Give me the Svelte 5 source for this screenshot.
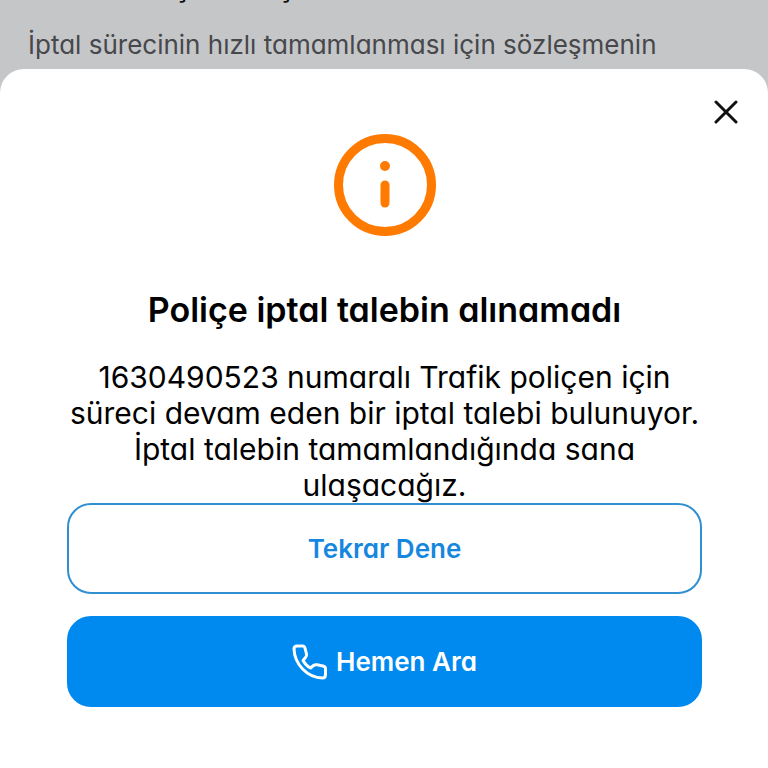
<script>
    const policyNumber = '1630490523';

    let open = true;
    let retries = 0;

    function close() {
        open = false;
    }
    function retry() {
        retries += 1;
    }
    function keydown(event) {
        if (event.key === 'Escape') {
            close();
        }
    }
</script>

<svelte:window on:keydown={keydown}/>

<main>
    <div class="behind">
        <h2>Noter Satış Sözleşmesi</h2>
        <p>İptal sürecinin hızlı tamamlanması için sözleşmenin</p>
    </div>

    {#if open}
        <section class="sheet" role="dialog" aria-modal="true" aria-labelledby="title">
            <button class="close" aria-label="Kapat" on:click={close}>
                <svg viewBox="0 0 24 24" width="24" height="24">
                    <path d="M2 2 22 22M22 2 2 22"/>
                </svg>
            </button>

            <svg class="info" viewBox="0 0 104 104" width="104" height="104">
                <circle cx="52" cy="52" r="46.5"/>
                <circle class="dot" cx="52" cy="33" r="5"/>
                <path d="M52 52v18"/>
            </svg>

            <h1 id="title">Poliçe iptal talebin alınamadı</h1>
            <p class="message">
                {policyNumber} numaralı Trafik poliçen için süreci devam eden bir iptal talebi bulunuyor.
                İptal talebin tamamlandığında sana ulaşacağız.
            </p>

            <div class="actions">
                <button class="outline" on:click={retry}>Tekrar Dene</button>
                <button class="primary">
                    <svg viewBox="0 0 36 36" width="36" height="36">
                        <path d="M5 2h6c1 0 1.500 .5 2 2l1.500 6c.3 1.500 0 2.500-1 3.500l-2.500 3c2 3.500 4.500 6 7.500 7.500l3-2.500c1-.8 2-1 3.500-.7l6 1.200c1.500 .5 2.500 1 2.500 2.500v6c0 2-1 3.500-3 3.500C15 33.500 2.500 20 2 5c0-2 1-3 3-3z"/>
                    </svg>
                    Hemen Ara
                </button>
            </div>
        </section>
    {/if}
</main>

<style>
    :global(body) {
        background: #c5c6c8;
    }
    main {
        min-height: 100vh;
        display: flex;
        flex-direction: column;
        overflow: hidden;
        font-family: Inter, "Noto Sans", sans-serif;
        /* single-storey a */
        font-feature-settings: "cv11";
    }
    h1, h2, p {
        margin: 0;
    }
    /* the page is scrolled, so its heading is cut by the top edge */
    .behind {
        margin-top: -32px;
        padding: 0 28px 6px;
    }
    .behind h2 {
        color: #111;
        font-size: 30px;
        line-height: 36px;
        font-weight: 600;
    }
    .behind p {
        padding-top: 23px;
        color: #46484b;
        font-size: 26px;
        line-height: 36px;
        white-space: nowrap;
    }
    .sheet {
        position: relative;
        flex: 1;
        display: flex;
        flex-direction: column;
        align-items: center;
        padding: 64px 66px 59px 67px;
        border-radius: 24px 24px 0 0;
        background: #fff;
    }
    button {
        font: inherit;
        font-feature-settings: inherit;
        cursor: pointer;
    }
    svg {
        display: block;
        fill: none;
        stroke: currentColor;
        stroke-linecap: round;
        stroke-linejoin: round;
        stroke-width: 3;
    }
    .close {
        position: absolute;
        top: 23px;
        right: 22px;
        padding: 8px;
        border: 0;
        background: none;
        color: #111;
    }
    .info {
        color: #ff7a00;
        stroke-width: 9;
    }
    .info .dot {
        fill: currentColor;
        stroke: none;
    }
    h1 {
        margin-top: 51px;
        font-size: 34px;
        line-height: 44px;
        font-weight: 600;
        text-align: center;
    }
    .message {
        padding-top: 27px;
        font-size: 30px;
        line-height: 36px;
        text-align: center;
    }
    .actions {
        align-self: stretch;
        display: grid;
        gap: 22px;
    }
    .actions button {
        min-height: 91px;
        display: flex;
        align-items: center;
        justify-content: center;
        gap: 8px;
        border: 2px solid #0089ee;
        border-radius: 24px;
        font-size: 26px;
        font-weight: 600;
    }
    .actions .outline {
        border-color: #2f8fd0;
        background: #fff;
        color: #1687df;
    }
    .actions .primary {
        background: #0089ee;
        color: #fff;
    }
</style>
